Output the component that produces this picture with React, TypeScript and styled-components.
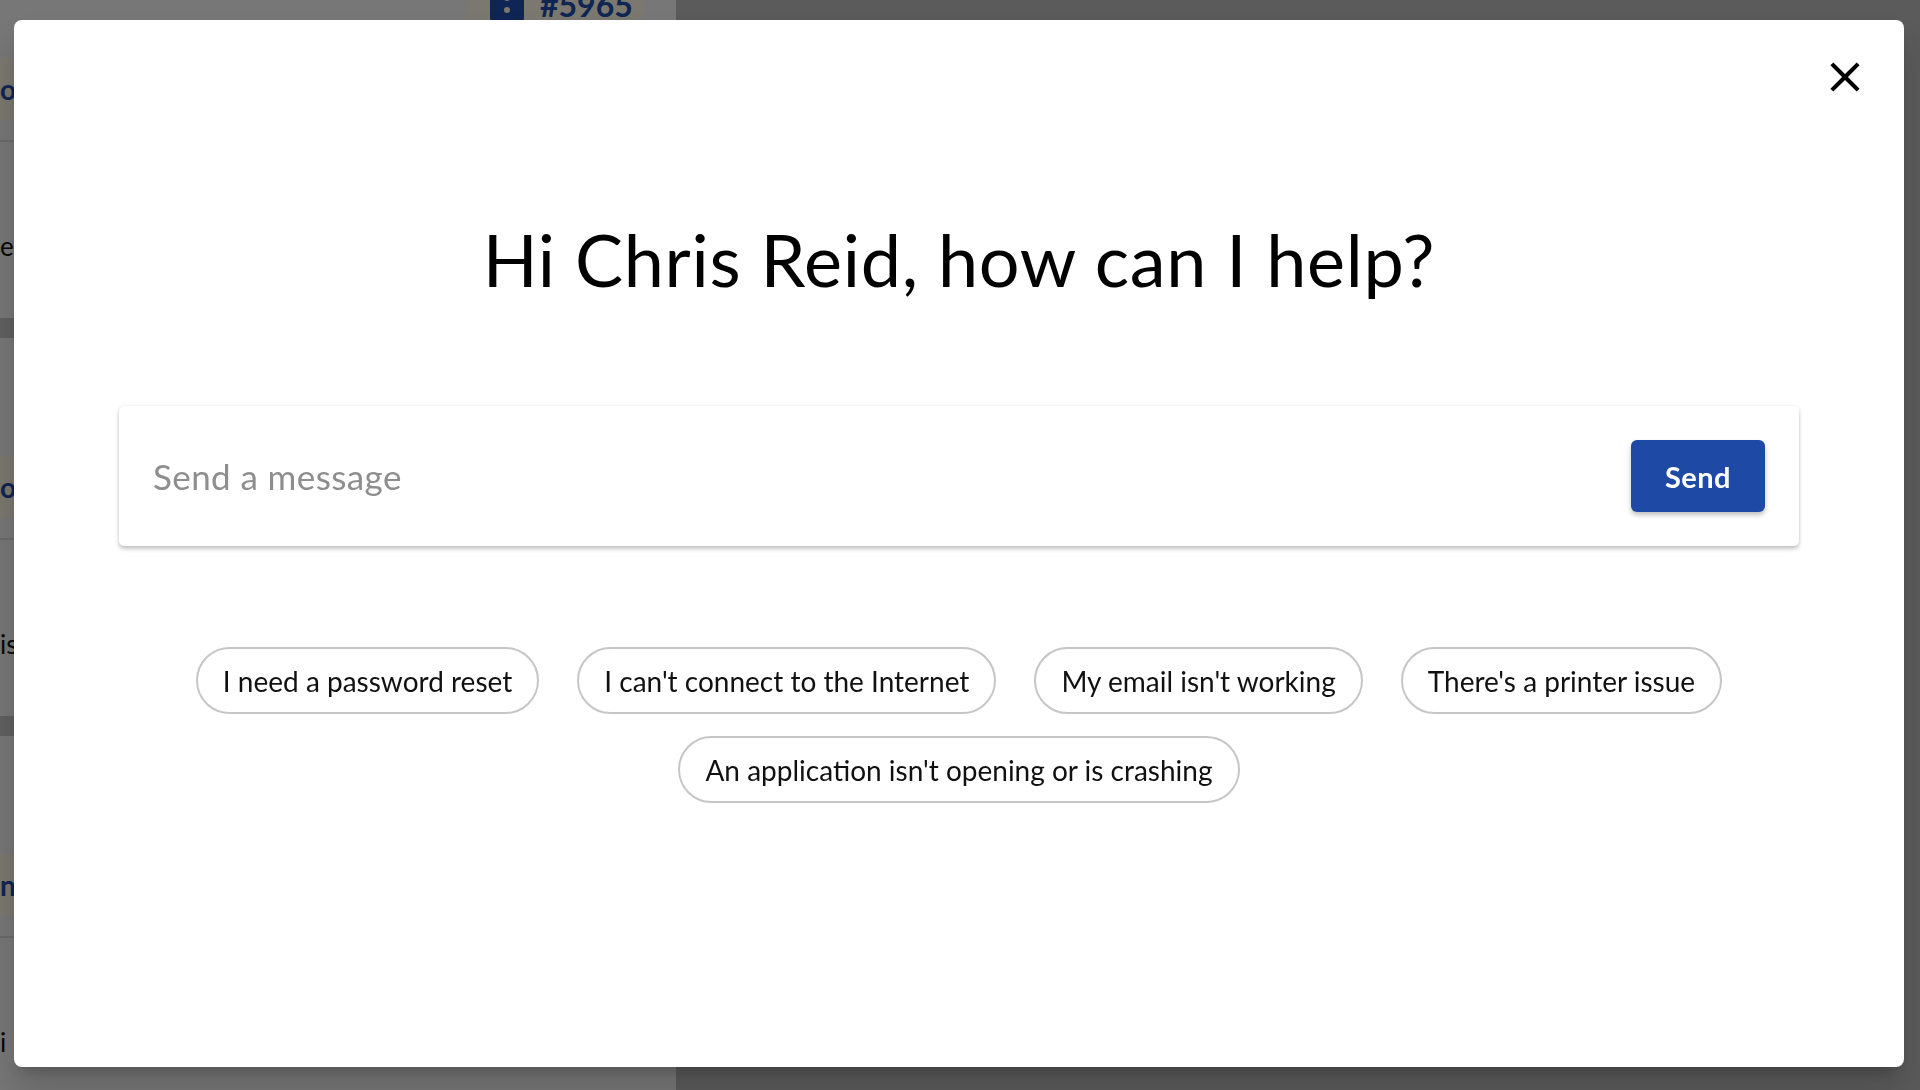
import React from "react";
import styled, { createGlobalStyle } from "styled-components";

const Global = createGlobalStyle`
  * { box-sizing: border-box; }
  html, body { margin: 0; padding: 0; height: 100%; overflow: hidden; }
  body { font-family: "Lato", "Noto Sans", sans-serif; background: #b8b8b8; }
`;

/* ---------- background page (dimmed behind the dialog) ---------- */
const Page = styled.div`
  display: flex;
  height: 100vh;
  background: #b6b6b6;
`;

const ListColumn = styled.div`
  width: 676px;
  background: #c0c0c0;
  display: flex;
  flex-direction: column;
  gap: 20px;
  margin-top: -60px;
  overflow: hidden;
`;

const TicketCard = styled.div`
  background: #eeeeee;
  height: 378px;
  flex: none;
  display: flex;
  flex-direction: column;
`;

const CardHeader = styled.div`
  height: 118px;
  display: flex;
  justify-content: flex-end;
  align-items: flex-start;
  padding: 34px 33px 0 0;
`;

const TicketChip = styled.div`
  width: 177px;
  height: 60px;
  background: #f4f0de;
  display: flex;
  align-items: center;
  gap: 16px;
  padding-left: 24px;
  color: #1e4aa6;
  font-weight: 700;
  font-size: 32px;
`;

const TitleBand = styled.div`
  height: 62px;
  background: #f4f0de;
  display: flex;
  align-items: center;
  color: #1e4aa6;
  font-weight: 700;
  font-size: 28px;
`;

const Divider = styled.div`
  height: 2px;
  margin-top: 20px;
  background: #d4d4d4;
`;

const CardBody = styled.div`
  padding-top: 88px;
  font-size: 26px;
  color: #111;
`;

/* ---------- dialog ---------- */
const Overlay = styled.div`
  position: fixed;
  inset: 0;
  background: rgba(0, 0, 0, 0.5);
  display: flex;
  padding: 20px 16px 23px 14px;
`;

const Dialog = styled.div`
  flex: 1;
  background: #ffffff;
  border-radius: 8px;
  box-shadow: 0 11px 15px -7px rgba(0, 0, 0, 0.2), 0 24px 38px 3px rgba(0, 0, 0, 0.14);
  display: flex;
  flex-direction: column;
`;

const TopBar = styled.div`
  display: flex;
  justify-content: flex-end;
  padding: 32px 34px 0 0;
`;

const CloseButton = styled.button`
  width: 50px;
  height: 50px;
  padding: 0;
  border: none;
  background: transparent;
  display: flex;
  align-items: center;
  justify-content: center;
  cursor: pointer;
  color: #000;
`;

const Heading = styled.h1`
  margin: 114px 0 0;
  text-align: center;
  font-family: "Lato", "Noto Sans", sans-serif;
  font-weight: 400;
  font-size: 72px;
  line-height: 1.2;
  letter-spacing: 0.7px;
  color: #000;
`;

const Composer = styled.div`
  margin: 104px 105px 0;
  height: 140px;
  padding: 0 34px;
  display: flex;
  align-items: center;
  gap: 24px;
  background: #fff;
  border-radius: 5px;
  box-shadow: 0 3px 4px rgba(0, 0, 0, 0.22), 0 0 3px rgba(0, 0, 0, 0.08);
`;

const MessageInput = styled.input`
  flex: 1;
  border: none;
  outline: none;
  background: transparent;
  font-family: "Lato", "Noto Sans", sans-serif;
  font-size: 35px;
  letter-spacing: 0.4px;
  color: #222;
  padding: 0;
  &::placeholder {
    color: #8e8e8e;
  }
`;

const SendButton = styled.button`
  width: 134px;
  height: 72px;
  border: none;
  border-radius: 6px;
  background: #1e4aa6;
  color: #fff;
  font-family: "Lato", "Noto Sans", sans-serif;
  font-weight: 700;
  font-size: 29px;
  letter-spacing: 0.5px;
  box-shadow: 0 3px 5px rgba(0, 0, 0, 0.25);
  cursor: pointer;
`;

const Suggestions = styled.div`
  margin: 101px 105px 0;
  display: flex;
  flex-wrap: wrap;
  justify-content: center;
  gap: 22px 38px;
`;

const SuggestionChip = styled.button`
  height: 67px;
  padding: 0 25px;
  border: 2px solid #c6c6c6;
  border-radius: 34px;
  background: #fff;
  font-family: "Lato", "Noto Sans", sans-serif;
  font-size: 28px;
  letter-spacing: 0;
  color: #111;
  cursor: pointer;
  white-space: nowrap;
`;

const TicketIcon = () => (
  <svg width="34" height="40" viewBox="0 0 34 40" aria-hidden>
    <rect x="0" y="0" width="34" height="40" rx="6" fill="#1e4aa6" />
    <circle cx="17" cy="14" r="3" fill="#f4f0de" />
    <circle cx="17" cy="26" r="3" fill="#f4f0de" />
  </svg>
);

const CloseIcon = () => (
  <svg width="50" height="50" viewBox="0 0 24 24" aria-hidden>
    <path
      fill="currentColor"
      d="M19 6.41 17.59 5 12 10.59 6.41 5 5 6.41 10.59 12 5 17.59 6.41 19 12 13.41 17.59 19 19 17.59 13.41 12z"
    />
  </svg>
);

const cards = [
  { title: "open", body: "el", chip: true },
  { title: "open", body: "is", chip: false },
  { title: "new", body: "i", chip: false },
];

const suggestions = [
  "I need a password reset",
  "I can't connect to the Internet",
  "My email isn't working",
  "There's a printer issue",
  "An application isn't opening or is crashing",
];

export default function App() {
  return (
    <>
      <Global />
      <Page>
        <ListColumn>
          {cards.map((c, i) => (
            <TicketCard key={i}>
              <CardHeader>
                {c.chip && (
                  <TicketChip>
                    <TicketIcon />
                    #5965
                  </TicketChip>
                )}
              </CardHeader>
              <TitleBand>{c.title}</TitleBand>
              <Divider />
              <CardBody>{c.body}</CardBody>
            </TicketCard>
          ))}
        </ListColumn>
      </Page>
      <Overlay>
        <Dialog role="dialog">
          <TopBar>
            <CloseButton aria-label="Close">
              <CloseIcon />
            </CloseButton>
          </TopBar>
          <Heading>Hi Chris Reid, how can I help?</Heading>
          <Composer>
            <MessageInput placeholder="Send a message" />
            <SendButton>Send</SendButton>
          </Composer>
          <Suggestions>
            {suggestions.map((s) => (
              <SuggestionChip key={s}>{s}</SuggestionChip>
            ))}
          </Suggestions>
        </Dialog>
      </Overlay>
    </>
  );
}
